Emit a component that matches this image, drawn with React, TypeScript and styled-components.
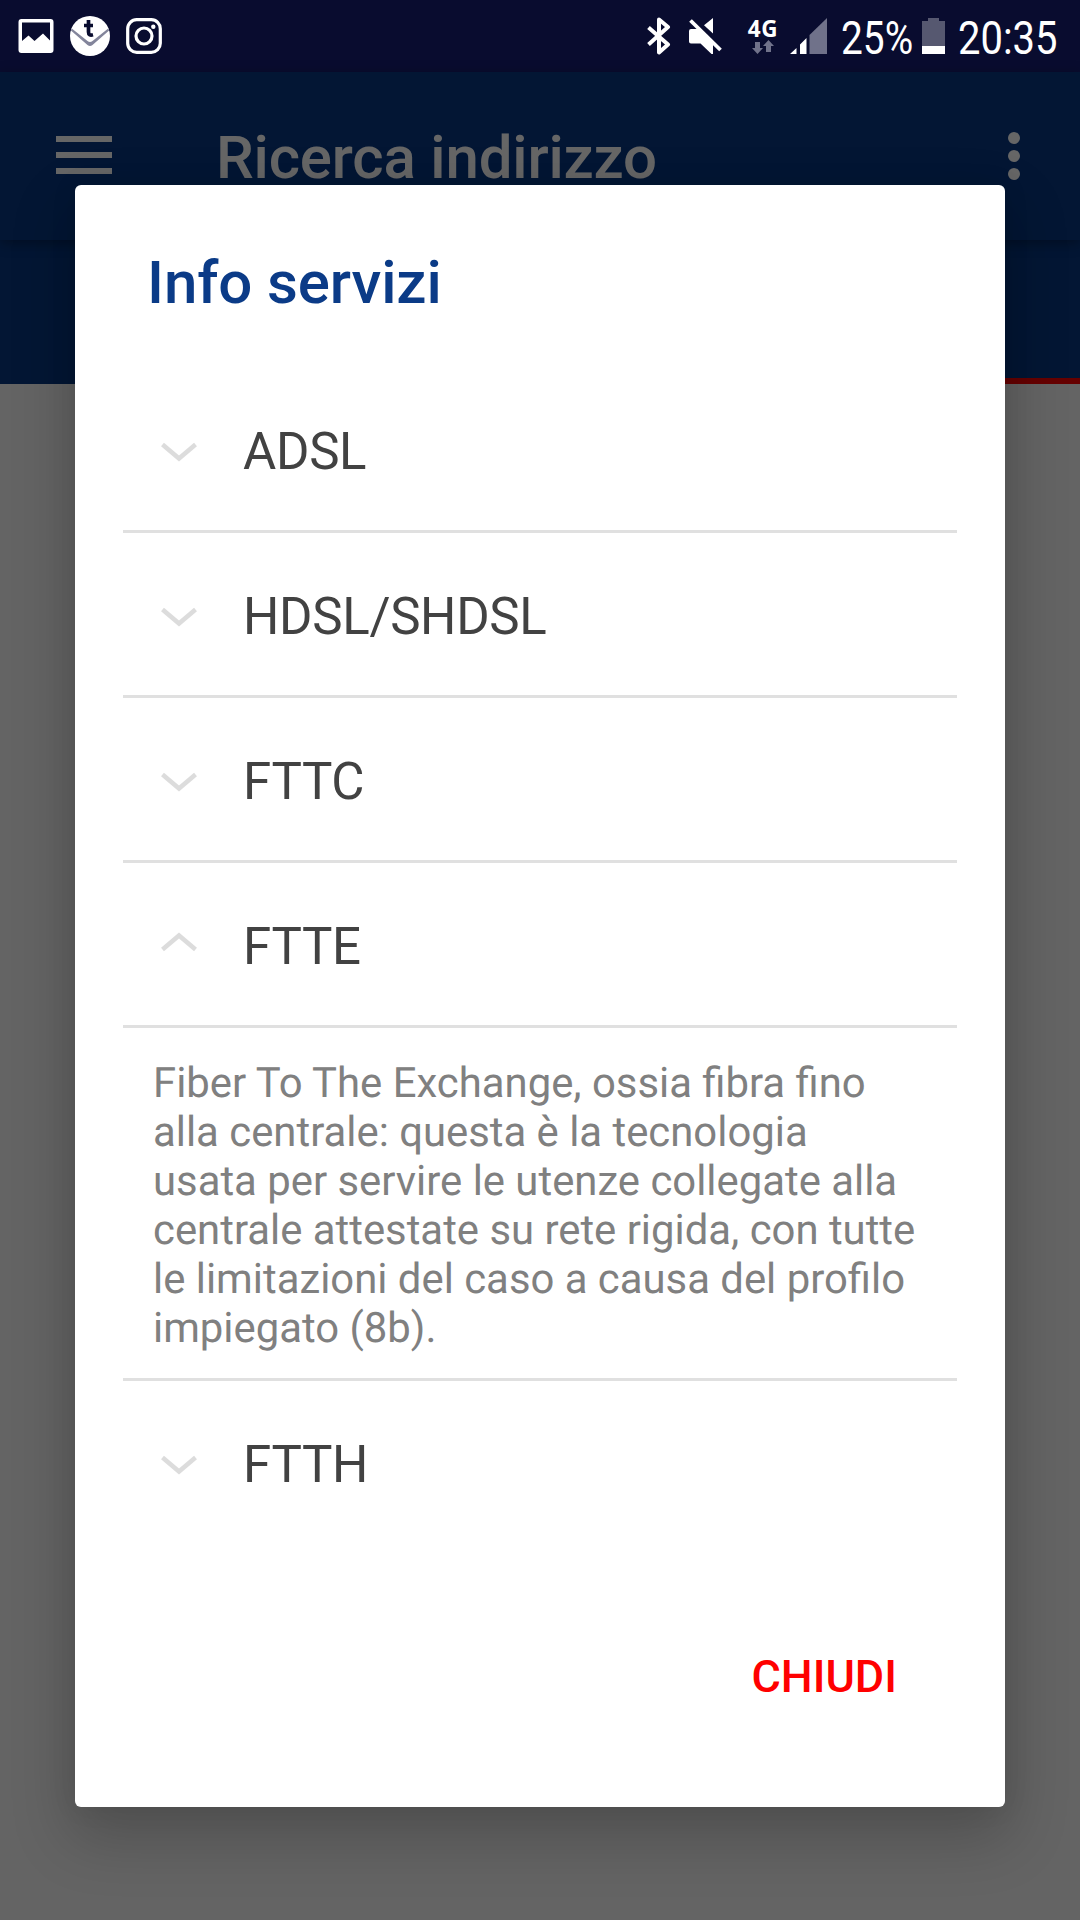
import React, { useState } from "react";
import styled, { createGlobalStyle } from "styled-components";

const GlobalStyle = createGlobalStyle`
  * { box-sizing: border-box; }
  body {
    margin: 0;
    background: #fafafa;
    font-family: Roboto, "Noto Sans", sans-serif;
  }
`;

const Screen = styled.div`
  position: relative;
  width: 1080px;
  height: 1920px;
  overflow: hidden;
  display: flex;
  flex-direction: column;
  background: #fafafa;
`;

const StatusBar = styled.header`
  flex: none;
  height: 72px;
  display: flex;
  align-items: center;
  justify-content: space-between;
  padding: 0 22px 0 16px;
  background: #090c2f;
  color: #fff;
`;

const StatusGroup = styled.div`
  display: flex;
  align-items: center;
`;

const Glyph = styled.svg<{ $before?: number }>`
  display: block;
  flex: none;
  margin-left: ${(p) => p.$before ?? 0}px;
`;

const Network = styled.div`
  width: 30px;
  height: 36px;
  margin-left: 25px;
  display: flex;
  flex-direction: column;
  align-items: center;
  justify-content: space-between;
`;

const NetworkLabel = styled.span`
  font: 700 22.5px/22px "Noto Sans", sans-serif;
  letter-spacing: 0.6px;
`;

const StatusText = styled.span<{ $width: number; $before: number; $stretch: number }>`
  width: ${(p) => p.$width}px;
  margin-left: ${(p) => p.$before}px;
  font-size: 46px;
  line-height: 72px;
  white-space: nowrap;

  > span {
    display: inline-block;
    transform: translateY(1.5px) scaleX(${(p) => p.$stretch});
    transform-origin: 0 50%;
  }
`;

const AppBar = styled.div`
  position: relative;
  z-index: 1;
  flex: none;
  height: 168px;
  display: flex;
  align-items: center;
  padding: 0 56px 0 56px;
  background: #083782;
  box-shadow: 0 3px 12px rgba(0, 0, 0, 0.35);
`;

const MenuButton = styled.div`
  width: 56px;
  height: 38px;
  margin-bottom: 2px;
  display: flex;
  flex-direction: column;
  justify-content: space-between;
`;

const MenuLine = styled.span`
  height: 6px;
  background: #fff;
`;

const AppTitle = styled.h1`
  flex: 1;
  margin: 0 0 0 104px;
  font-size: 60px;
  font-weight: 500;
  line-height: 70px;
  letter-spacing: -0.18px;
  padding-top: 4px;
  color: #fff;
`;

const MoreButton = styled.div`
  width: 12px;
  margin-right: 4px;
  display: flex;
  flex-direction: column;
  gap: 6px;
`;

const Dot = styled.span`
  width: 12px;
  height: 12px;
  border-radius: 50%;
  background: #fff;
`;

const Tabs = styled.div`
  flex: none;
  height: 144px;
  display: flex;
  background: #083782;
`;

const Tab = styled.div<{ $active?: boolean }>`
  flex: 1;
  border-bottom: 6px solid ${(p) => (p.$active ? "#ff0000" : "transparent")};
`;

const Scrim = styled.div`
  position: absolute;
  inset: 72px 0 0;
  z-index: 2;
  display: flex;
  justify-content: center;
  align-items: flex-start;
  padding-top: 113px;
  background: rgba(0, 0, 0, 0.6);
`;

const Dialog = styled.section`
  width: 930px;
  height: 1622px;
  display: flex;
  flex-direction: column;
  padding: 0 48px;
  border-radius: 6px;
  background: #fff;
  box-shadow: 0 26px 60px 6px rgba(0, 0, 0, 0.2), 0 0 28px rgba(0, 0, 0, 0.07);
`;

const DialogTitle = styled.h2`
  margin: 0;
  height: 183px;
  padding: 63px 0 0 24px;
  font-size: 60px;
  font-weight: 500;
  line-height: 70px;
  letter-spacing: -0.1px;
  color: #0b3b87;
`;

const Item = styled.div<{ $divided: boolean }>`
  height: 165px;
  display: flex;
  align-items: center;
  padding: 5px 0 0 38px;
  border-bottom: 3px solid ${(p) => (p.$divided ? "#e0e0e0" : "transparent")};
  font-size: 51px;
  line-height: 60px;
  letter-spacing: -0.3px;
  color: #424242;
  cursor: pointer;
`;

const Chevron = styled.svg<{ $up: boolean }>`
  width: 36px;
  height: 20px;
  margin-right: 46px;
  margin-bottom: ${(p) => (p.$up ? 10 : 0)}px;
`;

const Description = styled.p`
  margin: 0;
  height: 353px;
  padding: 31px 0 0 30px;
  border-bottom: 3px solid #e0e0e0;
  font-size: 41.85px;
  line-height: 49px;
  text-rendering: geometricPrecision;
  color: #808080;
  white-space: pre-line;
`;

const Actions = styled.div`
  flex: 1;
  display: flex;
  justify-content: flex-end;
  align-items: flex-start;
  padding: 105px 60px 0 0;
`;

const CloseButton = styled.button`
  padding: 0;
  border: 0;
  background: none;
  font: 500 45px/52px Roboto, sans-serif;
  color: #ff0000;
`;

const services = [
  { name: "ADSL" },
  { name: "HDSL/SHDSL" },
  { name: "FTTC" },
  {
    name: "FTTE",
    text: "Fiber To The Exchange, ossia fibra fino\nalla centrale: questa è la tecnologia\nusata per servire le utenze collegate alla\ncentrale attestate su rete rigida, con tutte\nle limitazioni del caso a causa del profilo\nimpiegato (8b).",
  },
  { name: "FTTH" },
];

const PictureIcon = () => (
  <Glyph width="40" height="40" viewBox="0 0 40 40">
    <path
      fill="#fff"
      fillRule="evenodd"
      d="M5.500 3h29a3 3 0 0 1 3 3v28a3 3 0 0 1-3 3h-29a3 3 0 0 1-3-3V6a3 3 0 0 1 3-3zM6 6.500V25l6.500-5.500 6 5.500L27 17.500l7 7V6.500z"
    />
  </Glyph>
);

const MailIcon = () => (
  <Glyph $before={14} width="40" height="40" viewBox="0 0 40 40">
    <circle cx="20" cy="20" r="20" fill="#fff" />
    <path d="M1.800 12.500 17.500 25q2.500 1.800 5 0L38.200 12.500l.9 2L22.500 29q-2.500 2-5 0L.9 14.500z" fill="#83859b" />
    <path
      d="M18.500 4v12q0 4 4.500 2.800M14 9.500h9"
      fill="none"
      stroke="#090c2f"
      strokeWidth="3.700"
    />
  </Glyph>
);

const CameraIcon = () => (
  <Glyph $before={16} width="36" height="36" viewBox="0 0 36 36" fill="none" stroke="#fff">
    <rect x="1.700" y="1.700" width="32.600" height="32.600" rx="9" strokeWidth="3.200" />
    <circle cx="18" cy="18" r="8" strokeWidth="3.200" />
    <circle cx="27.300" cy="8.700" r="2.200" fill="#fff" stroke="none" />
  </Glyph>
);

const BluetoothIcon = () => (
  <Glyph width="24" height="38" viewBox="0 0 24 38">
    <path
      d="M1.500 10.500 21 27.500 12 35.500V2.500l9 7.500L1.500 27.500"
      fill="none"
      stroke="#fff"
      strokeWidth="4"
      strokeLinejoin="round"
    />
  </Glyph>
);

const MuteIcon = () => (
  <Glyph $before={18} width="34" height="36" viewBox="0 0 34 36">
    <path d="M24 0v15.500L15 7.200zM2 11h8L24 25v11h-1.500L11.500 25.500H2a2 2 0 0 1-2-2V13a2 2 0 0 1 2-2z" fill="#fff" />
    <path d="M1.500 2.500 31.500 32" stroke="#fff" strokeWidth="3.800" />
  </Glyph>
);

const DataArrows = () => (
  <Glyph width="22" height="14" viewBox="0 0 22 14" fill="#70728a">
    <path d="M3 2h5v6h3l-5.500 6L0 8h3zM14 12h5V6h3l-5.500-6L11 6h3z" />
  </Glyph>
);

const SignalIcon = () => (
  <Glyph $before={12} width="37" height="36" viewBox="0 0 37 36">
    <path d="M0 36 6.500 30v6zM10 26.500l6.500-6.500v16H10z" fill="#fff" />
    <path d="M19.500 17 37 0v36H19.500z" fill="#70728a" />
  </Glyph>
);

const BatteryIcon = () => (
  <Glyph width="23" height="36" viewBox="0 0 23 36">
    <path d="M6 0h11v3h6v25H0V3h6z" fill="#565870" />
    <path d="M0 28h23v8H0z" fill="#fff" />
  </Glyph>
);

export default function App() {
  const [open, setOpen] = useState("FTTE");

  return (
    <>
      <GlobalStyle />
      <Screen>
        <StatusBar>
          <StatusGroup>
            <PictureIcon />
            <MailIcon />
            <CameraIcon />
          </StatusGroup>
          <StatusGroup>
            <BluetoothIcon />
            <MuteIcon />
            <Network>
              <NetworkLabel>4G</NetworkLabel>
              <DataArrows />
            </Network>
            <SignalIcon />
            <StatusText $width={81} $before={14} $stretch={0.845}>
              <span>25%</span>
            </StatusText>
            <BatteryIcon />
            <StatusText $width={100} $before={13} $stretch={0.868}>
              <span>20:35</span>
            </StatusText>
          </StatusGroup>
        </StatusBar>
        <AppBar>
          <MenuButton>
            <MenuLine />
            <MenuLine />
            <MenuLine />
          </MenuButton>
          <AppTitle>Ricerca indirizzo</AppTitle>
          <MoreButton>
            <Dot />
            <Dot />
            <Dot />
          </MoreButton>
        </AppBar>
        <Tabs>
          <Tab />
          <Tab $active />
        </Tabs>
        <Scrim>
          <Dialog role="dialog">
            <DialogTitle>Info servizi</DialogTitle>
            {services.map((s, i) => {
              const expanded = open === s.name;
              return (
                <React.Fragment key={s.name}>
                  <Item
                    $divided={i < services.length - 1}
                    onClick={() => setOpen(expanded ? "" : s.name)}
                  >
                    <Chevron $up={expanded} viewBox="0 0 36 20" fill="none" stroke="#dcdcdc" strokeWidth="4.500">
                      <path d={expanded ? "M1.500 17.500 18 3.500l16.500 14" : "M1.500 2.500 18 16.500l16.500-14"} />
                    </Chevron>
                    {s.name}
                  </Item>
                  {expanded && s.text && <Description>{s.text}</Description>}
                </React.Fragment>
              );
            })}
            <Actions>
              <CloseButton>CHIUDI</CloseButton>
            </Actions>
          </Dialog>
        </Scrim>
      </Screen>
    </>
  );
}
